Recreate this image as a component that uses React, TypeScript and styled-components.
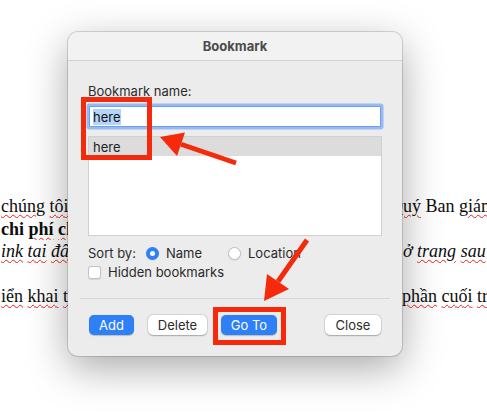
import styled, { createGlobalStyle } from 'styled-components';

const GlobalStyle = createGlobalStyle`
  html, body {
    margin: 0;
    padding: 0;
    background: #ffffff;
  }
`;

const Stage = styled.div`
  position: relative;
  width: 487px;
  height: 415px;
  overflow: hidden;
  background: #ffffff;
`;

/* document behind the dialog */

const Page = styled.div`
  padding-top: 195px;
  font-family: 'Liberation Serif', 'Times New Roman', serif;
  font-size: 18px;
  line-height: 22.5px;
  color: #0d0d0d;
`;

const DocLine = styled.div<{ $rightAt: number }>`
  display: grid;
  grid-template-columns: ${({ $rightAt }) => $rightAt}px 1fr;
  height: 22.5px;
  white-space: nowrap;
`;

const DocCell = styled.span<{ $bold?: boolean; $italic?: boolean }>`
  overflow: hidden;
  padding-left: 1px;
  font-weight: ${({ $bold }) => ($bold ? 700 : 400)};
  font-style: ${({ $italic }) => ($italic ? 'italic' : 'normal')};
`;

const Typo = styled.span`
  text-decoration: underline wavy #e4231b;
  text-decoration-thickness: 1px;
  text-underline-offset: 2px;
`;

/* dialog */

const Dialog = styled.div`
  position: absolute;
  left: 68px;
  top: 32px;
  width: 334px;
  height: 324px;
  box-sizing: border-box;
  display: flex;
  flex-direction: column;
  background: #ececec;
  border-radius: 10px;
  box-shadow: 0 0 0 1px rgba(0, 0, 0, 0.14), 0 12px 40px rgba(0, 0, 0, 0.34);
  font-family: Inter, 'Noto Sans', sans-serif;
  font-size: 13px;
  color: #2b2b2b;
  overflow: hidden;
`;

const TitleBar = styled.div`
  height: 28px;
  display: flex;
  align-items: center;
  justify-content: center;
  background: #f2f2f2;
  border-bottom: 1px solid #d2d2d2;
  font-weight: 700;
  color: #4b4b4b;
`;

const Body = styled.div`
  flex: 1;
  display: flex;
  flex-direction: column;
  padding: 22px 20px 0 20px;
`;

const Label = styled.div`
  line-height: 16px;
  height: 16px;
`;

const NameInput = styled.div`
  margin: 7px 1px 0 1px;
  height: 21px;
  box-sizing: border-box;
  display: flex;
  align-items: center;
  padding-left: 3px;
  background: #fff;
  border: 1px solid #6d9ef0;
  box-shadow: 0 0 0 2.5px rgba(80, 145, 245, 0.55);
  border-radius: 1px;
  color: #111;
`;

const Selected = styled.span`
  background: #b3d4fb;
  line-height: 16px;
`;

const List = styled.div`
  margin-top: 9px;
  height: 100px;
  box-sizing: border-box;
  background: #fff;
  border: 1px solid #d0d0d0;
`;

const ListRow = styled.div<{ $active?: boolean }>`
  height: 19px;
  display: flex;
  align-items: center;
  padding-left: 4px;
  background: ${({ $active }) => ($active ? '#dcdcdc' : 'transparent')};
  color: #222;
`;

const OptionRow = styled.div<{ $gap: number }>`
  display: flex;
  align-items: center;
  height: 16px;
  margin-top: ${({ $gap }) => $gap}px;
`;

const SortLabel = styled.span`
  width: 58px;
`;

const RadioOption = styled.label<{ $width: number }>`
  display: flex;
  align-items: center;
  gap: 7px;
  width: ${({ $width }) => $width}px;
`;

const Radio = styled.span<{ $checked?: boolean }>`
  width: 13px;
  height: 13px;
  box-sizing: border-box;
  border-radius: 50%;
  display: flex;
  align-items: center;
  justify-content: center;
  background: ${({ $checked }) => ($checked ? '#2f7ff6' : '#ffffff')};
  border: ${({ $checked }) => ($checked ? 'none' : '1px solid #bdbdbd')};
  box-shadow: 0 0.5px 1px rgba(0, 0, 0, 0.12);

  &::after {
    content: '';
    display: ${({ $checked }) => ($checked ? 'block' : 'none')};
    width: 5px;
    height: 5px;
    border-radius: 50%;
    background: #fff;
  }
`;

const Checkbox = styled.span`
  width: 13px;
  height: 13px;
  box-sizing: border-box;
  margin-right: 7px;
  border-radius: 3px;
  background: #fff;
  border: 1px solid #c2c2c2;
  box-shadow: 0 0.5px 1px rgba(0, 0, 0, 0.1);
`;

const Separator = styled.div`
  margin: 18px -8px 0 -8px;
  height: 1px;
  background: #d6d6d6;
`;

const ButtonRow = styled.div`
  display: flex;
  align-items: center;
  margin-top: 16px;
  padding-left: 1px;
  padding-right: 1px;
`;

const Button = styled.button<{ $primary?: boolean; $width: number; $push?: boolean }>`
  width: ${({ $width }) => $width}px;
  height: 20px;
  margin-left: ${({ $push }) => ($push ? 'auto' : '0')};
  margin-right: 14px;
  padding: 0;
  border: none;
  border-radius: 5px;
  font-family: inherit;
  font-size: 13px;
  color: ${({ $primary }) => ($primary ? '#ffffff' : '#2b2b2b')};
  background: ${({ $primary }) => ($primary ? '#2f80f7' : '#ffffff')};
  box-shadow: ${({ $primary }) =>
    $primary ? '0 0.5px 1px rgba(0, 0, 0, 0.2)' : '0 0 0 0.5px rgba(0,0,0,0.12), 0 0.5px 1.5px rgba(0, 0, 0, 0.25)'};

  &:last-child {
    margin-right: 0;
  }
`;

/* red markup drawn over the screenshot */

const Markup = styled.svg`
  position: absolute;
  left: 0;
  top: 0;
  pointer-events: none;
`;

const RED = '#f52a0c';

const Arrow = ({ tail, tip, wingA, wingB }: { tail: number[]; tip: number[]; wingA: number[]; wingB: number[] }) => {
  const base = [(wingA[0] + wingB[0]) / 2, (wingA[1] + wingB[1]) / 2];
  return (
    <g>
      <line x1={tail[0]} y1={tail[1]} x2={base[0]} y2={base[1]} stroke={RED} strokeWidth={5} />
      <polygon points={`${tip.join(',')} ${wingA.join(',')} ${wingB.join(',')}`} fill={RED} />
    </g>
  );
};

const App = () => (
  <>
    <GlobalStyle />
    <Stage>
      <Page>
        <DocLine $rightAt={389}>
          <DocCell>
            <Typo>chúng</Typo> <Typo>tôi</Typo> <Typo>xin</Typo> <Typo>gửi</Typo>
          </DocCell>
          <DocCell>
            <Typo>Quý</Typo> Ban <Typo>giám</Typo>
          </DocCell>
        </DocLine>
        <DocLine $rightAt={403}>
          <DocCell $bold>
            chi <Typo>phí</Typo> <Typo>cho</Typo>
          </DocCell>
          <DocCell />
        </DocLine>
        <DocLine $rightAt={402}>
          <DocCell $italic>
            <Typo>ink</Typo> <Typo>tai</Typo> <Typo>đây</Typo>
          </DocCell>
          <DocCell $italic>
            ở <Typo>trang</Typo> <Typo>sau</Typo>
          </DocCell>
        </DocLine>
        <DocLine $rightAt={402}>
          <DocCell />
          <DocCell />
        </DocLine>
        <DocLine $rightAt={401}>
          <DocCell>
            <Typo>iển</Typo> <Typo>khai</Typo> <Typo>theo</Typo>
          </DocCell>
          <DocCell>
            <Typo>phần</Typo> <Typo>cuối</Typo> <Typo>trang</Typo>
          </DocCell>
        </DocLine>
      </Page>

      <Dialog>
        <TitleBar>Bookmark</TitleBar>
        <Body>
          <Label>Bookmark name:</Label>
          <NameInput>
            <Selected>here</Selected>
          </NameInput>
          <List>
            <ListRow $active>here</ListRow>
          </List>
          <OptionRow $gap={9}>
            <SortLabel>Sort by:</SortLabel>
            <RadioOption $width={82}>
              <Radio $checked />
              Name
            </RadioOption>
            <RadioOption $width={90}>
              <Radio />
              Location
            </RadioOption>
          </OptionRow>
          <OptionRow $gap={3}>
            <Checkbox />
            Hidden bookmarks
          </OptionRow>
          <Separator />
          <ButtonRow>
            <Button $primary $width={45}>
              Add
            </Button>
            <Button $width={59}>Delete</Button>
            <Button $primary $width={56}>
              Go To
            </Button>
            <Button $width={56} $push>
              Close
            </Button>
          </ButtonRow>
        </Body>
      </Dialog>

      <Markup width={487} height={415} viewBox="0 0 487 415">
        <rect x={83.5} y={99.5} width={66} height={58} fill="none" stroke={RED} strokeWidth={5} />
        <rect x={215.5} y={309.5} width={68} height={33} fill="none" stroke={RED} strokeWidth={5} />
        <Arrow tail={[236, 163]} tip={[160, 137]} wingA={[185, 132.5]} wingB={[177, 156]} />
        <Arrow tail={[307, 240]} tip={[264, 301]} wingA={[289, 289]} wingB={[267, 274]} />
      </Markup>
    </Stage>
  </>
);

export default App;
